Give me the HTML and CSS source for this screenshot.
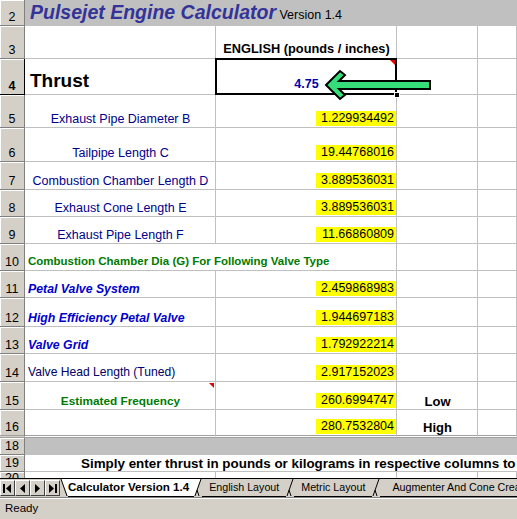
FILE: index.html
```html
<!DOCTYPE html>
<html lang="en">
<head>
    <meta charset="UTF-8">
    <title>Pulsejet Engine Calculator</title>
    <link rel="stylesheet" href="styles.css">
</head>
<body>
    <div class="sheet">
        <table class="grid">
            <colgroup>
                <col class="c-head">
                <col class="c-a">
                <col class="c-b">
                <col class="c-c">
                <col class="c-d">
            </colgroup>
            <tr class="r2">
                <th>2</th>
                <td colspan="4" class="title-cell"><span class="title">Pulsejet Engine Calculator</span> <span class="version">Version 1.4</span></td>
            </tr>
            <tr class="r3">
                <th>3</th>
                <td></td>
                <td class="center unit">ENGLISH (pounds / inches)</td>
                <td></td>
                <td></td>
            </tr>
            <tr class="r4">
                <th class="active-row">4</th>
                <td class="thrust">Thrust</td>
                <td class="center selected">
                    <span class="thrust-val">4.75</span>
                    <div class="sel-box"></div>
                    <div class="note-mark"></div>
                    <div class="fill-handle"></div>
                </td>
                <td></td>
                <td></td>
            </tr>
            <tr class="r5">
                <th>5</th>
                <td class="center label">Exhaust Pipe Diameter B</td>
                <td class="value"><span>1.229934492</span></td>
                <td></td>
                <td></td>
            </tr>
            <tr class="r6">
                <th>6</th>
                <td class="center label">Tailpipe Length C</td>
                <td class="value"><span>19.44768016</span></td>
                <td></td>
                <td></td>
            </tr>
            <tr class="r7">
                <th>7</th>
                <td class="center label">Combustion Chamber Length D</td>
                <td class="value"><span>3.889536031</span></td>
                <td></td>
                <td></td>
            </tr>
            <tr class="r8">
                <th>8</th>
                <td class="center label">Exhaust Cone Length E</td>
                <td class="value"><span>3.889536031</span></td>
                <td></td>
                <td></td>
            </tr>
            <tr class="r9">
                <th>9</th>
                <td class="center label">Exhaust Pipe Length F</td>
                <td class="value"><span>11.66860809</span></td>
                <td></td>
                <td></td>
            </tr>
            <tr class="r10">
                <th>10</th>
                <td colspan="2" class="section">Combustion Chamber Dia (G) For Following Valve Type</td>
                <td></td>
                <td></td>
            </tr>
            <tr class="r11">
                <th>11</th>
                <td class="valve">Petal Valve System</td>
                <td class="value"><span>2.459868983</span></td>
                <td></td>
                <td></td>
            </tr>
            <tr class="r12">
                <th>12</th>
                <td class="valve">High Efficiency Petal Valve</td>
                <td class="value"><span>1.944697183</span></td>
                <td></td>
                <td></td>
            </tr>
            <tr class="r13">
                <th>13</th>
                <td class="valve">Valve Grid</td>
                <td class="value"><span>1.792922214</span></td>
                <td></td>
                <td></td>
            </tr>
            <tr class="r14">
                <th>14</th>
                <td class="plain">Valve Head Length (Tuned)</td>
                <td class="value"><span>2.917152023</span></td>
                <td></td>
                <td></td>
            </tr>
            <tr class="r15">
                <th>15</th>
                <td class="center freq has-note">Estimated Frequency<div class="note-mark"></div></td>
                <td class="value"><span>260.6994747</span></td>
                <td class="center bound">Low</td>
                <td></td>
            </tr>
            <tr class="r16">
                <th>16</th>
                <td></td>
                <td class="value"><span>280.7532804</span></td>
                <td class="center bound">High</td>
                <td></td>
            </tr>
            <tr class="r18">
                <th>18</th>
                <td colspan="4" class="band"></td>
            </tr>
            <tr class="r19">
                <th>19</th>
                <td colspan="4" class="hint">Simply enter thrust in pounds or kilograms in respective columns to get your engine dimensions</td>
            </tr>
            <tr class="r20">
                <th>20</th>
                <td></td>
                <td></td>
                <td></td>
                <td></td>
            </tr>
        </table>

        <!-- green arrow pointing at the thrust input -->
        <svg class="arrow" width="112" height="38" viewBox="0 0 112 38">
            <polygon points="4,19 18,5 23,9 17,15 108,15 108,23 17,23 23,29 18,33" fill="#35de78" stroke="#000" stroke-width="2" stroke-linejoin="miter"/>
        </svg>
    </div>

    <div class="tabbar">
        <div class="nav">
            <button class="nav-btn"><svg width="9" height="9" viewBox="0 0 9 9"><rect x="0" y="0" width="2" height="9"/><polygon points="8,0 3,4.5 8,9"/></svg></button>
            <button class="nav-btn"><svg width="9" height="9" viewBox="0 0 9 9"><polygon points="7,0 2,4.5 7,9"/></svg></button>
            <button class="nav-btn"><svg width="9" height="9" viewBox="0 0 9 9"><polygon points="2,0 7,4.5 2,9"/></svg></button>
            <button class="nav-btn"><svg width="9" height="9" viewBox="0 0 9 9"><polygon points="1,0 6,4.5 1,9"/><rect x="7" y="0" width="2" height="9"/></svg></button>
        </div>
        <svg class="edge" width="8" height="18" viewBox="0 0 8 18"><polygon points="1,0 8,0 8,17" fill="#fff"/><polyline points="1,0 7,17" fill="none" stroke="#000"/></svg>
        <span class="tab active">Calculator Version 1.4</span>
        <svg class="edge" width="8" height="18" viewBox="0 0 8 18"><polygon points="0,0 7,0 0,17" fill="#fff"/><polyline points="7,0 1,17" fill="none" stroke="#000"/><polyline points="3,11 5,17" fill="none" stroke="#000"/></svg>
        <span class="tab">English Layout</span>
        <svg class="edge" width="8" height="18" viewBox="0 0 8 18"><polyline points="7,0 1,17" fill="none" stroke="#000"/><polyline points="3,11 5,17" fill="none" stroke="#000"/></svg>
        <span class="tab">Metric Layout</span>
        <svg class="edge" width="8" height="18" viewBox="0 0 8 18"><polyline points="7,0 1,17" fill="none" stroke="#000"/><polyline points="3,11 5,17" fill="none" stroke="#000"/></svg>
        <span class="tab last">Augmenter And Cone Creator</span>
    </div>

    <div class="statusbar">Ready</div>
</body>
</html>
```

FILE: styles.css
```css
* {
    margin: 0;
    padding: 0;
    box-sizing: border-box;
}

body {
    font-family: 'Liberation Sans', Arial, sans-serif;
    background: #d4d0c8;
    width: 517px;
    height: 519px;
    overflow: hidden;
}

/* Worksheet */
.sheet {
    position: relative;
    height: 478px;
    overflow: hidden;
    background: #fff;
}

.grid {
    border-collapse: separate;
    border-spacing: 0;
    table-layout: fixed;
    width: 517px;
}

.c-head { width: 25px; }
.c-a { width: 191px; }
.c-b { width: 181px; }
.c-c { width: 81px; }
.c-d { width: 39px; }

.grid th {
    background: #d4d0c8;
    border-right: 1px solid #808080;
    border-bottom: 1px solid #808080;
    box-shadow: inset 1px 1px 0 #fff;
    font-weight: normal;
    font-size: 12.5px;
    line-height: 14px;
    text-align: center;
    vertical-align: bottom;
    padding-bottom: 1px;
    color: #000;
}

.grid th.active-row {
    font-weight: bold;
    border-right-color: #000;
    border-bottom-color: #000;
}

.grid td {
    border-right: 1px solid #c0c0c0;
    border-bottom: 1px solid #c0c0c0;
    vertical-align: bottom;
    padding: 0 2px 0 3px;
    font-size: 12.5px;
    line-height: 15px;
    white-space: nowrap;
}

.r2 { height: 26px; }
.r3 { height: 33px; }
.r4 { height: 36px; }
.r5 { height: 33px; }
.r6 { height: 34px; }
.r7 { height: 28px; }
.r8 { height: 27px; }
.r9 { height: 27px; }
.r10 { height: 27px; }
.r11 { height: 27px; }
.r12 { height: 29px; }
.r13 { height: 27px; }
.r14 { height: 28px; }
.r15 { height: 28px; }
.r16 { height: 28px; }
.r18 { height: 17px; }
.r19 { height: 17px; }
.r20 { height: 15px; }

.grid .r16 td, .grid .r16 th {
    border-bottom: 3px double #a0a0a0;
}

.grid .r18 th, .grid .r19 th, .grid .r20 th {
    line-height: 13px;
}

.center { text-align: center; }

/* Title row */
.grid .title-cell {
    background: #c0c0c0;
    padding: 0 0 2px 5px;
}

.title {
    font-size: 19.5px;
    line-height: 20px;
    font-weight: bold;
    font-style: italic;
    color: #333399;
}

.version {
    font-size: 12.5px;
    color: #000;
}

.grid .unit {
    font-weight: bold;
    font-size: 12.8px;
    padding-bottom: 2px;
}

.grid .thrust {
    font-size: 19px;
    font-weight: bold;
    line-height: 20px;
    padding: 0 0 3px 5px;
}

.thrust-val {
    font-weight: bold;
    color: #0000aa;
    font-size: 12.5px;
}

.grid .selected {
    position: relative;
    padding-bottom: 2px;
}

.sel-box {
    position: absolute;
    left: -1px;
    top: -1px;
    right: -1px;
    bottom: -1px;
    border: 2px solid #000;
}

.fill-handle {
    position: absolute;
    right: -4px;
    bottom: -4px;
    width: 6px;
    height: 6px;
    background: #000;
    border: 1px solid #fff;
}

.note-mark {
    position: absolute;
    top: 1px;
    right: 1px;
    width: 0;
    height: 0;
    border-top: 5px solid #e00000;
    border-left: 5px solid transparent;
}

.grid .has-note { position: relative; }

.grid .label {
    color: #00008b;
}

.grid .value {
    text-align: right;
    padding: 0 0 1px 0;
}

.value span {
    display: inline-block;
    width: 80px;
    background: #ffff00;
    color: #000;
    text-align: right;
    padding-right: 2px;
}

.grid .section {
    color: #007a00;
    font-weight: bold;
    font-size: 11.5px;
    padding-bottom: 1px;
}

.grid .valve {
    color: #0000cc;
    font-weight: bold;
    font-style: italic;
    font-size: 12.3px;
}

.grid .plain {
    color: #000066;
    font-size: 12.1px;
    padding-bottom: 1px;
}

.grid .freq {
    color: #007a00;
    font-weight: bold;
    font-size: 11.8px;
}

.grid .bound {
    font-weight: bold;
    font-size: 13px;
}

.grid .band {
    background: #c0c0c0;
}

.grid .hint {
    font-weight: bold;
    font-size: 13.4px;
    line-height: 15px;
    padding: 0 0 0 56px;
    border-right: none;
}

.arrow {
    position: absolute;
    left: 322px;
    top: 66px;
}

/* Sheet tabs */
.tabbar {
    height: 20px;
    display: flex;
    align-items: stretch;
    border-top: 1px solid #000;
    border-bottom: 1px solid #808080;
    white-space: nowrap;
    overflow: hidden;
    font-size: 10.7px;
}

.nav {
    display: flex;
    width: 60px;
    padding-top: 1px;
}

.nav-btn {
    width: 15px;
    height: 16px;
    border: 1px solid;
    border-color: #fff #404040 #404040 #fff;
    background: #d4d0c8;
    display: flex;
    align-items: center;
    justify-content: center;
}

.edge {
    flex: none;
}

.tab {
    padding: 2px 7px 0;
    border-bottom: 1px solid #000;
}

.tab.active {
    background: #fff;
    font-weight: bold;
    font-size: 11.6px;
    padding: 1px 5px 0 0;
}

.tab.last {
    padding-left: 12px;
}

.statusbar {
    height: 21px;
    padding: 3px 5px;
    font-size: 11.5px;
    border-top: 1px solid #fff;
}
```
